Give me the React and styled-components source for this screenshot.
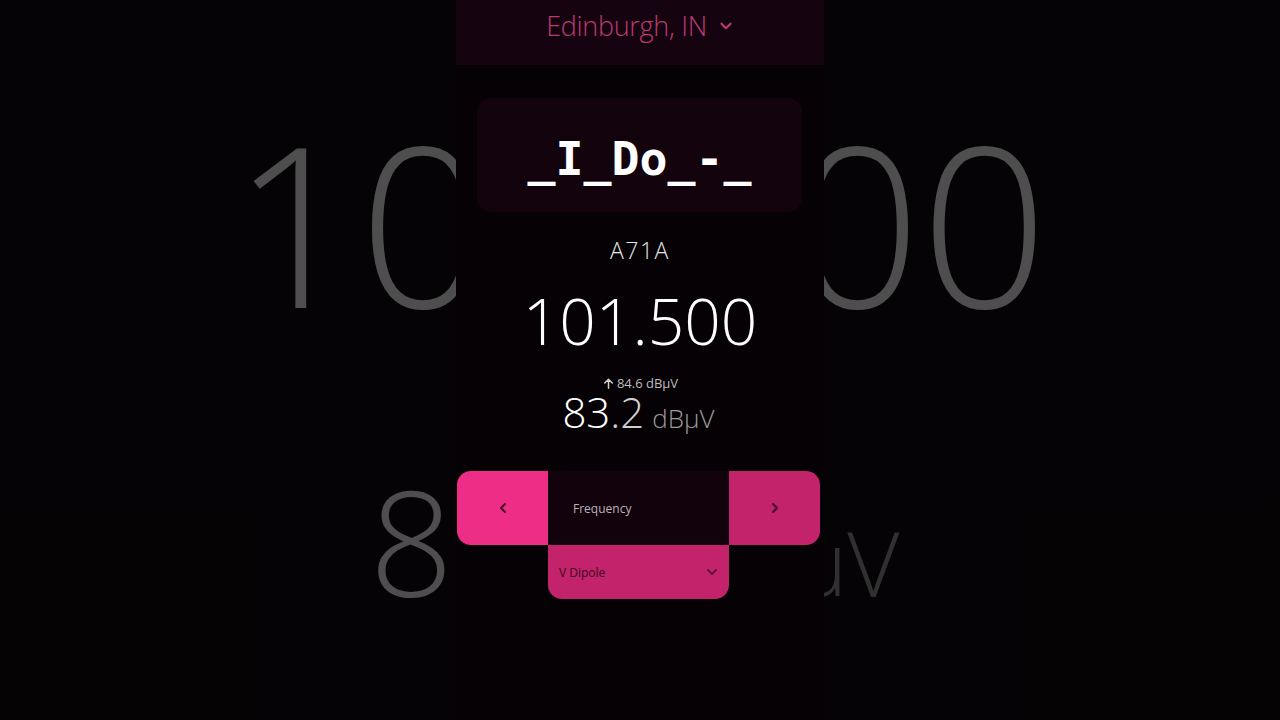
import React from "react";
import styled, { createGlobalStyle } from "styled-components";

const Global = createGlobalStyle`
  html, body { margin: 0; padding: 0; background: #050505; }
  body { font-family: "Open Sans", "Noto Sans", sans-serif; }
`;

const Page = styled.div`
  position: relative;
  width: 1280px;
  height: 720px;
  overflow: hidden;
  background: #050505;
`;

const Backdrop = styled.div`
  position: absolute;
  inset: 0;
  display: flex;
  justify-content: center;
  transform: scale(3.48);
  transform-origin: 640px 360px;
  opacity: 0.29;
  pointer-events: none;
`;

const Column = styled.div`
  position: relative;
  width: 368px;
  height: 720px;
  margin: 0 auto;
  background: #060105;
  display: flex;
  flex-direction: column;
  align-items: stretch;
`;

const Header = styled.div`
  height: 65px;
  box-sizing: border-box;
  padding-bottom: 14px;
  background: #160310;
  display: flex;
  align-items: center;
  justify-content: center;
  gap: 11px;
  color: #bb3a70;
  font-size: 27px;
  font-weight: 300;
  letter-spacing: -0.3px;
`;

const Card = styled.div`
  margin: 33px 22px 0 21px;
  height: 114px;
  box-sizing: border-box;
  padding-top: 8px;
  border-radius: 14px;
  background: #13030c;
  display: flex;
  align-items: center;
  justify-content: center;
  color: #ffffff;
  font-family: "DejaVu Sans Mono", monospace;
  font-weight: bold;
  font-size: 46.5px;
  white-space: pre;
`;

const Model = styled.div`
  margin-top: 24px;
  text-align: center;
  color: #e6e6e6;
  font-size: 23px;
  line-height: 28px;
  letter-spacing: 1.5px;
  font-weight: 300;
`;

const Freq = styled.div`
  margin-top: 21px;
  text-align: center;
  color: #ffffff;
  font-size: 64px;
  line-height: 72px;
  font-weight: 300;
`;

const Peak = styled.div`
  margin-top: 18px;
  display: flex;
  align-items: center;
  justify-content: center;
  gap: 2px;
  color: #bdbdbd;
  font-size: 13px;
  line-height: 16px;
`;

const Level = styled.div`
  text-align: center;
  line-height: 42px;
  font-weight: 300;
  margin-right: 3px;
`;

const LevelPart = styled.span`
  font-size: ${(p) => p.$size}px;
  color: ${(p) => p.$color};
  margin-left: ${(p) => p.$gap || 0}px;
`;

const Controls = styled.div`
  margin-top: 28px;
  margin-left: 1px;
  width: 363px;
  display: grid;
  grid-template-columns: 91px 181px 91px;
  grid-template-rows: 74px 54px;
`;

const StepButton = styled.button`
  border: none;
  padding: 0;
  margin: 0;
  background: ${(p) => p.$bg};
  border-radius: ${(p) => (p.$side === "left" ? "14px 0 0 14px" : "0 14px 14px 0")};
  display: flex;
  align-items: center;
  justify-content: center;
  color: #3d0a24;
`;

const ModeLabel = styled.div`
  background: #12020c;
  display: flex;
  align-items: center;
  padding-left: 25px;
  color: #b9b2b6;
  font-size: 12px;
`;

const Dropdown = styled.div`
  grid-column: 2;
  grid-row: 2;
  background: #c2236a;
  border-radius: 0 0 14px 14px;
  display: flex;
  align-items: center;
  justify-content: space-between;
  padding: 0 10px 0 11px;
  color: #3a0a22;
  font-size: 12px;
`;

const Chevron = ({ dir = "down", size = 14, color = "currentColor", width = 1.6 }) => {
  const pts = {
    down: "3,5 7,9 11,5",
    left: "9,3 5,7 9,11",
    right: "5,3 9,7 5,11",
  }[dir];
  return (
    <svg width={size} height={size} viewBox="0 0 14 14" fill="none">
      <polyline points={pts} stroke={color} strokeWidth={width} strokeLinecap="round" strokeLinejoin="round" />
    </svg>
  );
};

const ArrowUp = () => (
  <svg width="13" height="13" viewBox="0 0 14 14" fill="none">
    <path d="M7 12V2.5M3 6.5l4-4 4 4" stroke="#cfcfcf" strokeWidth="1.6" strokeLinecap="round" strokeLinejoin="round" />
  </svg>
);

function Screen() {
  return (
    <Column>
      <Header>
        <span>Edinburgh, IN</span>
        <Chevron dir="down" size={16} color="#bb3a70" width={1.8} />
      </Header>
      <Card>_I_Do_-_</Card>
      <Model>A71A</Model>
      <Freq>101.500</Freq>
      <Peak>
        <ArrowUp />
        <span>84.6 dBµV</span>
      </Peak>
      <Level>
        <LevelPart $size={42} $color="#ffffff">83</LevelPart>
        <LevelPart $size={42} $color="#cfcfcf">.2</LevelPart>
        <LevelPart $size={26} $color="#9a9a9a" $gap={8}>dBµV</LevelPart>
      </Level>
      <Controls>
        <StepButton $bg="#ee2e86" $side="left">
          <Chevron dir="left" size={14} width={1.8} />
        </StepButton>
        <ModeLabel>Frequency</ModeLabel>
        <StepButton $bg="#c2236a" $side="right">
          <Chevron dir="right" size={14} width={1.8} />
        </StepButton>
        <Dropdown>
          <span>V Dipole</span>
          <Chevron dir="down" size={14} width={1.5} />
        </Dropdown>
      </Controls>
    </Column>
  );
}

export default function App() {
  return (
    <Page>
      <Global />
      <Backdrop aria-hidden="true">
        <Screen />
      </Backdrop>
      <Screen />
    </Page>
  );
}
